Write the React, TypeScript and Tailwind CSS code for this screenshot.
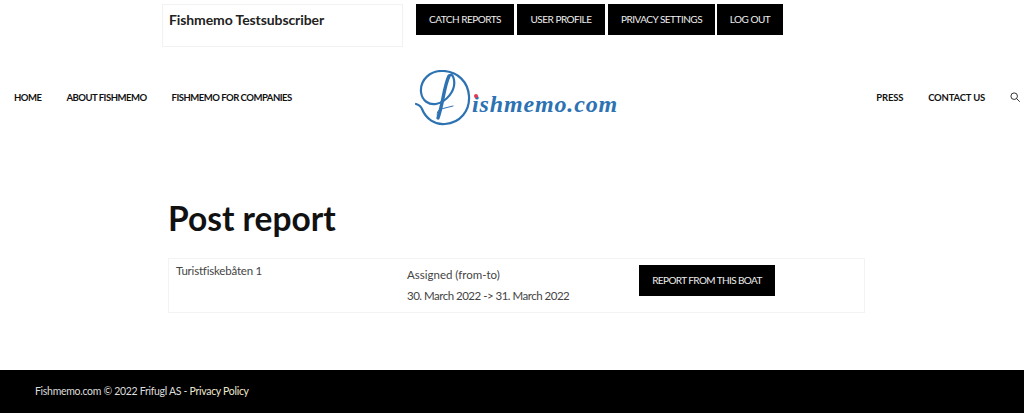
const font = { fontFamily: '"Lato", "Noto Sans", sans-serif' };

const accountLinks = [
  { label: 'CATCH REPORTS', width: 'w-[98px]' },
  { label: 'USER PROFILE', width: 'w-[88px]' },
  { label: 'PRIVACY SETTINGS', width: 'w-[107px]' },
  { label: 'LOG OUT', width: 'w-[66px] -ml-[1px]' },
];

function Logo() {
  return (
    <div className="flex h-[60px] w-[204px] items-center pt-[2px]">
      <svg width="58" height="58" viewBox="-1 -1 58 58" fill="none" className="shrink-0">
        <path
          d="M0 33 C3 34 5 35 6 38 C10 48 19 54 29 53 C44 52 54 40 53 25 C52 11 42 1 28 0 C14 -1 4 9 5 21 C6 30 13 34 20 33 C30 31 40 20 38 9 C37 3 34 2 32 7"
          stroke="#2d72b2"
          strokeWidth="2.2"
          strokeLinecap="round"
        />
        <path d="M33 5 C28 15 27 33 22 47" stroke="#2d72b2" strokeWidth="3.4" strokeLinecap="round" />
        <path d="M22 47 C20 42 22 39 25 38 C29 37 33 36 37 35" stroke="#2d72b2" strokeWidth="1" strokeLinecap="round" />
      </svg>
      <div className="relative -ml-[1px] mt-[11px]">
        <span className="absolute left-[2px] top-[2px] h-[4px] w-[4px] rounded-full bg-[#e8344e]" />
        <span
          className="text-[24px] italic leading-none tracking-[0.85px] text-[#2d72b2]"
          style={{ fontFamily: '"Liberation Serif", serif' }}
        >
          ishmemo.com
        </span>
      </div>
    </div>
  );
}

function SearchIcon() {
  return (
    <svg width="10" height="10" viewBox="0 0 11 11" fill="none" stroke="#333" strokeWidth="1.1" className="block">
      <circle cx="4.6" cy="4.6" r="3.6" />
      <path d="M7.3 7.3 L10.4 10.4" strokeLinecap="round" />
    </svg>
  );
}

export default function App() {
  return (
    <div className="h-[420px] bg-white text-[#222]" style={font}>
      <div className="flex pl-[162px] pt-[4px]">
        <div className="h-[43px] w-[241px] border border-[#f2f2f2] px-[6px] pt-[6px] text-[14px] font-bold leading-[18px] tracking-[-0.1px]">
          Fishmemo Testsubscriber
        </div>
        <div className="ml-[13px] flex h-[31px] gap-[3px]">
          {accountLinks.map((l) => (
            <a
              key={l.label}
              className={`flex ${l.width} items-center justify-center bg-black text-[10px] tracking-[-0.5px] text-[#eee]`}
            >
              {l.label}
            </a>
          ))}
        </div>
      </div>

      <div className="mt-[20px] flex h-[60px] items-center justify-between pl-[14px] pr-[4px] pt-[2px] text-[9.5px] font-bold text-[#111]">
        <nav className="flex w-[401px] gap-[25px] tracking-[-0.5px]">
          <a>HOME</a>
          <a>ABOUT FISHMEMO</a>
          <a>FISHMEMO FOR COMPANIES</a>
        </nav>
        <Logo />
        <nav className="flex w-[401px] items-center justify-end gap-[25px] tracking-[-0.2px]">
          <a>PRESS</a>
          <a>CONTACT US</a>
          <a className="-mt-[2px]">
            <SearchIcon />
          </a>
        </nav>
      </div>

      <main className="pl-[168px]">
        <h1 className="mt-[66px] h-[60px] text-[33.5px] font-bold leading-[50px] text-[#111]">Post report</h1>
        <div className="mt-[5px] flex h-[55px] w-[697px] border border-[#f3f3f3] text-[11.5px] text-[#444]">
          <div className="w-[231px] pl-[7px] pt-[5px] leading-[14px] tracking-[-0.2px]">Turistfiskebåten 1</div>
          <div className="w-[239px] pl-[7px] pt-[5px] leading-[21px]">
            <p>Assigned (from-to)</p>
            <p className="tracking-[-0.5px]">30. March 2022 -&gt; 31. March 2022</p>
          </div>
          <div className="pt-[6px]">
            <a className="flex h-[31px] w-[136px] items-center justify-center bg-black text-[10px] tracking-[-0.6px] text-[#eee]">
              REPORT FROM THIS BOAT
            </a>
          </div>
        </div>
      </main>

      <footer className="mt-[57px] flex h-[43px] items-center bg-black pl-[35px] text-[10.5px] tracking-[-0.3px] text-[#ddd]">
        Fishmemo.com © 2022 Frifugl AS -&nbsp;<a className="text-[#eee8d0]">Privacy Policy</a>
      </footer>
    </div>
  );
}
